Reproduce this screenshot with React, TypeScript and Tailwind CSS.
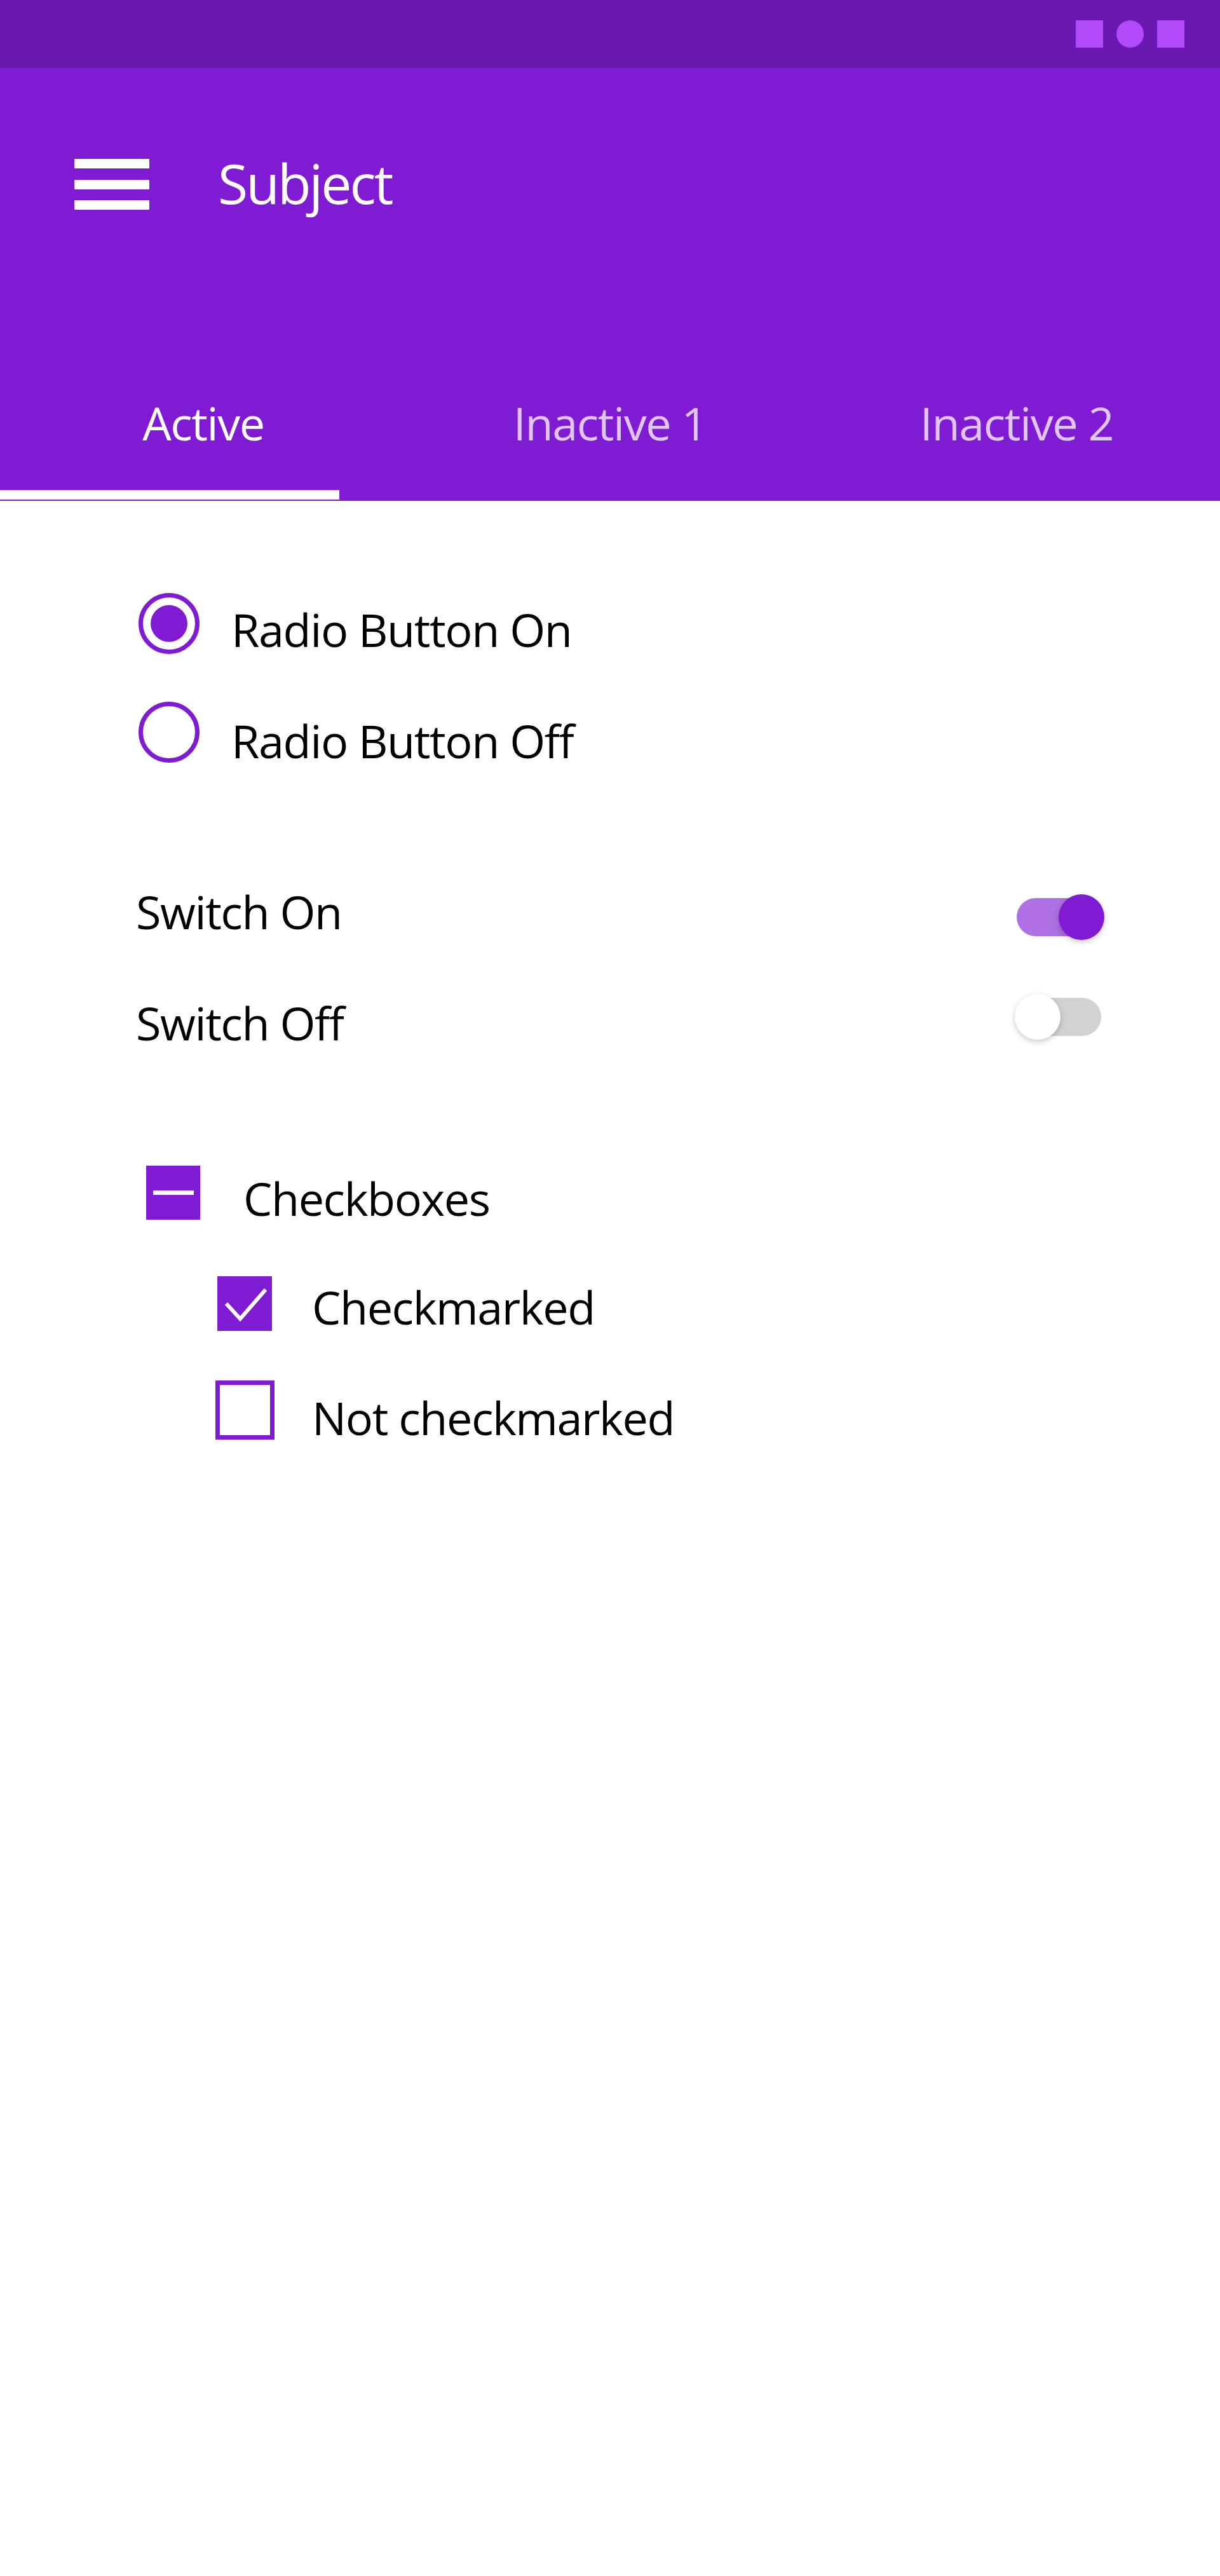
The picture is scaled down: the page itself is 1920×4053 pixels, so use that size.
import React from 'react';

const font = { fontFamily: '"Open Sans", "Noto Sans", sans-serif' };

const Radio: React.FC<{ on?: boolean }> = ({ on }) => (
  <div className="w-[96px] h-[96px] shrink-0 rounded-full border-[7px] border-[#7f1cd3] flex items-center justify-center">
    {on && <div className="w-[58px] h-[58px] rounded-full bg-[#7f1cd3]" />}
  </div>
);

const Toggle: React.FC<{ on?: boolean }> = ({ on }) => (
  <div className="relative w-[141px] h-[72px] shrink-0">
    <div
      className={
        on
          ? 'absolute left-[3px] top-[6px] w-[133px] h-[60px] rounded-full bg-[#ae70e2]'
          : 'absolute left-[3px] top-[6px] w-[133px] h-[60px] rounded-full bg-[#d2d2d2]'
      }
    />
    <div
      className={
        on
          ? 'absolute right-0 top-0 w-[72px] h-[72px] rounded-full bg-[#7f1cd3] shadow-[0_3px_10px_rgba(0,0,0,0.22)]'
          : 'absolute left-0 top-0 w-[72px] h-[72px] rounded-full bg-white shadow-[0_3px_10px_rgba(0,0,0,0.22)]'
      }
    />
  </div>
);

const Label: React.FC<{ children: React.ReactNode; className?: string }> = ({ children, className }) => (
  <span className={`text-[72px] leading-none text-black tracking-[-0.02em] whitespace-nowrap ${className ?? ''}`}>
    {children}
  </span>
);

const App: React.FC = () => {
  const tabs = ['Active', 'Inactive 1', 'Inactive 2'];

  return (
    <div className="w-[1920px] min-h-[4053px] bg-white" style={font}>
      {/* status bar */}
      <div className="h-[107px] bg-[#6a19b0] flex items-center justify-end gap-[21px] pr-[56px]">
        <div className="w-[43px] h-[43px] bg-[#b14af8]" />
        <div className="w-[43px] h-[43px] rounded-full bg-[#b14af8]" />
        <div className="w-[43px] h-[43px] bg-[#b14af8]" />
      </div>

      {/* app bar */}
      <div className="bg-[#7f1cd3]">
        <div className="h-[366px] flex items-center pl-[117px]">
          <div className="w-[118px] h-[80px] flex flex-col justify-between">
            <div className="h-[15px] bg-white" />
            <div className="h-[15px] bg-white" />
            <div className="h-[15px] bg-white" />
          </div>
          <span className="ml-[108px] pb-[4px] text-[86px] leading-none text-white tracking-[-0.035em]">Subject</span>
        </div>
        <div className="h-[298px] grid grid-cols-3 items-end pb-[70px]">
          {tabs.map((t, i) => (
            <div
              key={t}
              className={
                i === 0
                  ? 'text-center text-[72px] leading-none text-white tracking-[-0.02em]'
                  : 'text-center text-[72px] leading-none text-[#dfc6f4] tracking-[-0.02em]'
              }
            >
              {t}
            </div>
          ))}
        </div>
        <div className="h-[15px] w-[534px] bg-white" />
        <div className="h-[2px]" />
      </div>

      {/* content */}
      <div className="flex flex-col">
        <div className="mt-[143px] h-[100px] flex items-center pl-[218px]">
          <Radio on />
          <Label className="ml-[50px] pt-[18px]">Radio Button On</Label>
        </div>
        <div className="mt-[71px] h-[100px] flex items-center pl-[218px]">
          <Radio />
          <Label className="ml-[50px] pt-[26px]">Radio Button Off</Label>
        </div>

        <div className="mt-[191px] h-[100px] flex items-center justify-between pl-[214px] pr-[182px]">
          <Label className="pb-[18px]">Switch On</Label>
          <Toggle on />
        </div>
        <div className="mt-[57px] h-[100px] flex items-center justify-between pl-[214px] pr-[182px]">
          <Label className="pt-[18px]">Switch Off</Label>
          <Toggle />
        </div>

        <div className="mt-[176px] h-[100px] flex items-center pl-[230px]">
          <div className="w-[85px] h-[85px] shrink-0 bg-[#7f1cd3] flex items-center justify-center">
            <div className="w-[64px] h-[7px] bg-white" />
          </div>
          <Label className="ml-[68px] pt-[18px]">Checkboxes</Label>
        </div>
        <div className="mt-[75px] h-[100px] flex items-center pl-[342px]">
          <div className="w-[86px] h-[86px] shrink-0 bg-[#7f1cd3]">
            <svg width="86" height="86" viewBox="0 0 86 86">
              <path d="M14 43 L36 67 L76 21" fill="none" stroke="white" strokeWidth="6" />
            </svg>
          </div>
          <Label className="ml-[63px] pt-[10px]">Checkmarked</Label>
        </div>
        <div className="mt-[67px] h-[100px] flex items-center pl-[339px]">
          <div className="w-[93px] h-[93px] shrink-0 border-[7px] border-[#7f1cd3]" />
          <Label className="ml-[59px] pt-[24px]">Not checkmarked</Label>
        </div>
      </div>
    </div>
  );
};

export default App;
